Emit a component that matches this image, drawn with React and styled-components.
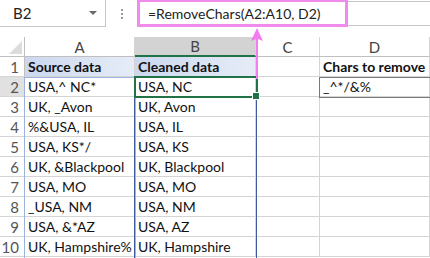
import React from 'react'
import styled, { createGlobalStyle } from 'styled-components'

const GlobalStyle = createGlobalStyle`
  body {
    margin: 0;
    background: #fff;
    font-family: Lato, "Open Sans", sans-serif;
  }
`

const Page = styled.div`
  width: 430px;
  height: 258px;
  overflow: hidden;
  position: relative;
  background: #fff;
`

const FormulaBar = styled.div`
  display: flex;
  align-items: stretch;
  height: 27px;
  margin-bottom: 10px;
`

const NameBox = styled.div`
  width: 106px;
  box-sizing: border-box;
  border: 1px solid #c6c6c6;
  border-left: none;
  border-top: none;
  display: flex;
  align-items: center;
  justify-content: space-between;
  padding: 0 8px 0 13px;
  font-size: 15px;
  color: #222;
`

const Caret = styled.span`
  width: 0;
  height: 0;
  border-left: 4px solid transparent;
  border-right: 4px solid transparent;
  border-top: 4px solid #6a6a6a;
`

const Dots = styled.div`
  width: 31px;
  display: flex;
  flex-direction: column;
  align-items: center;
  justify-content: center;
  gap: 2px;
  span {
    width: 2px;
    height: 2px;
    background: #9a9a9a;
  }
`

const Formula = styled.div`
  flex: 0 0 211px;
  box-sizing: border-box;
  border: 3px solid #f08cec;
  border-top-width: 2px;
  display: flex;
  align-items: center;
  padding-left: 8px;
  font-size: 14px;
  color: #222;
  white-space: nowrap;
`

const FormulaRest = styled.div`
  flex: 1;
  border-top: 1px solid #c6c6c6;
  border-bottom: 1px solid #c6c6c6;
  margin-top: 1px;
  margin-bottom: 1px;
`

const Sheet = styled.div`
  display: grid;
  grid-template-columns: 25px 110px 121px 64px 1fr;
  grid-auto-rows: 20px;
  position: relative;
`

const ColHead = styled.div`
  box-sizing: border-box;
  border-right: 1px solid #d4d4d4;
  border-bottom: ${p => (p.$active ? '2px solid #217346' : '1px solid #bfbfbf')};
  background: ${p => (p.$active ? '#d3d3d3' : '#fff')};
  color: #444;
  font-size: 15px;
  display: flex;
  align-items: center;
  justify-content: center;
`

const Corner = styled.div`
  box-sizing: border-box;
  border-right: 1px solid #bfbfbf;
  border-bottom: 1px solid #bfbfbf;
  position: relative;
  &::after {
    content: '';
    position: absolute;
    right: 2px;
    bottom: 2px;
    border-left: 13px solid transparent;
    border-bottom: 13px solid #dcdcdc;
  }
`

const RowHead = styled.div`
  box-sizing: border-box;
  border-right: 1px solid #bfbfbf;
  border-bottom: 1px solid #d4d4d4;
  background: ${p => (p.$active ? '#e1e1e1' : '#fff')};
  color: #555;
  font-size: 15px;
  display: flex;
  align-items: center;
  justify-content: flex-end;
  padding-right: 5px;
`

const Cell = styled.div`
  box-sizing: border-box;
  border-right: 1px solid #d4d4d4;
  border-bottom: 1px solid #d4d4d4;
  background: ${p => (p.$head ? 'linear-gradient(90deg, #cbd8ef, #e6ecf7)' : '#fff')};
  font-weight: ${p => (p.$bold ? 700 : 400)};
  font-size: 14px;
  color: #111;
  display: flex;
  align-items: center;
  padding-left: 3px;
  white-space: nowrap;
  overflow: visible;
`

const Box = styled.div`
  position: absolute;
  box-sizing: border-box;
  pointer-events: none;
  border: ${p => p.$border};
`

const Handle = styled.div`
  position: absolute;
  width: 6px;
  height: 6px;
  background: #217346;
  border: 1px solid #fff;
  right: -4px;
  bottom: -4px;
`

const Arrow = styled.svg`
  position: absolute;
  left: 250px;
  top: 27px;
`

const rows = [
  ['Source data', 'Cleaned data', '', 'Chars to remove'],
  ['USA,^ NC*', 'USA, NC', '', '_^*/&%'],
  ['UK, _Avon', 'UK, Avon', '', ''],
  ['%&USA, IL', 'USA, IL', '', ''],
  ['USA, KS*/', 'USA, KS', '', ''],
  ['UK, &Blackpool', 'UK, Blackpool', '', ''],
  ['USA, MO', 'USA, MO', '', ''],
  ['_USA, NM', 'USA, NM', '', ''],
  ['USA, &*AZ', 'USA, AZ', '', ''],
  ['UK, Hampshire%', 'UK, Hampshire', '', ''],
]

const App = () => {
  return (
    <Page>
      <GlobalStyle />
      <FormulaBar>
        <NameBox>
          B2
          <Caret />
        </NameBox>
        <Dots>
          <span />
          <span />
          <span />
        </Dots>
        <Formula>=RemoveChars(A2:A10, D2)</Formula>
        <FormulaRest />
      </FormulaBar>
      <Sheet>
        <Corner />
        {['A', 'B', 'C', 'D'].map(c => (
          <ColHead key={c} $active={c === 'B'}>
            {c}
          </ColHead>
        ))}
        {rows.map((r, i) => (
          <React.Fragment key={i}>
            <RowHead $active={i === 1}>{i + 1}</RowHead>
            {r.map((v, j) => (
              <Cell key={j} $head={i === 0 && j < 2} $bold={i === 0}>
                {v}
              </Cell>
            ))}
          </React.Fragment>
        ))}
        <Box $border="1px solid #9db3dd" style={{ left: 24, top: 40, width: 112, height: 182 }} />
        <Box $border="1px solid #3f5a9e" style={{ left: 134, top: 40, width: 123, height: 182 }} />
        <Box $border="1px solid #7a7a7a" style={{ left: 319, top: 40, width: 112, height: 21 }} />
        <Box $border="2px solid #217346" style={{ left: 134, top: 39, width: 124, height: 22 }}>
          <Handle />
        </Box>
      </Sheet>
      <Arrow width="14" height="52" viewBox="0 0 14 52">
        <path d="M7 1 L13 14 L8 12 L8 52 L6 52 L6 12 L1 14 Z" fill="#f27cf0" />
      </Arrow>
    </Page>
  )
}

export default App
